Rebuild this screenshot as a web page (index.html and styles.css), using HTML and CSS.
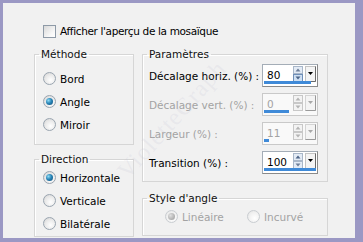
FILE: index.html
```html
<!DOCTYPE html>
<html lang="fr">
<head>
    <meta charset="UTF-8">
    <meta name="viewport" content="width=device-width, initial-scale=1.0">
    <title>Mosaïque</title>
    <link rel="stylesheet" href="styles.css">
</head>
<body>
    <div class="frame">
        <div class="panel">
            <div class="check-row">
                <span class="checkbox"></span>
                <span class="check-label">Afficher l'aperçu de la mosaïque</span>
            </div>

            <div class="columns">
                <div class="col">
                    <fieldset class="group method">
                        <legend>Méthode</legend>
                        <div class="group-body">
                            <div class="radio-row"><span class="radio"></span>Bord</div>
                            <div class="radio-row"><span class="radio checked"></span>Angle</div>
                            <div class="radio-row"><span class="radio"></span>Miroir</div>
                        </div>
                    </fieldset>

                    <fieldset class="group direction">
                        <legend>Direction</legend>
                        <div class="group-body">
                            <div class="radio-row"><span class="radio checked"></span>Horizontale</div>
                            <div class="radio-row"><span class="radio"></span>Verticale</div>
                            <div class="radio-row"><span class="radio"></span>Bilatérale</div>
                        </div>
                    </fieldset>
                </div>

                <div class="col">
                    <fieldset class="group params">
                        <legend>Paramètres</legend>
                        <div class="group-body">
                            <div class="param-row">
                                <span class="param-label">Décalage horiz. (%) :</span>
                                <div class="spin">
                                    <span class="spin-value">80</span>
                                    <svg class="spin-btns" width="24" height="17" viewBox="0 0 24 17">
                                        <rect x="0.5" y="0.5" width="9" height="7" fill="#e3ebf5" stroke="#a9b7c9"/>
                                        <rect x="0.5" y="8.5" width="9" height="7" fill="#cfe0f3" stroke="#6f8fb8"/>
                                        <path d="M5 2.5 L7.5 5.5 L2.5 5.5 Z" fill="#6d7f99"/>
                                        <path d="M2.5 10.5 L7.5 10.5 L5 13.5 Z" fill="#4c6488"/>
                                        <rect x="12.5" y="0.5" width="10" height="15" fill="#f4f4f4" stroke="#c4c4c4"/>
                                        <path d="M22.5 0.5 V15.5 H12.5" fill="none" stroke="#6a6a6a"/>
                                        <path d="M15 6 L20 6 L17.5 9 Z" fill="#000"/>
                                    </svg>
                                    <span class="spin-bar" style="width: 47px"></span>
                                </div>
                            </div>

                            <div class="param-row disabled">
                                <span class="param-label">Décalage vert. (%) :</span>
                                <div class="spin">
                                    <span class="spin-value">0</span>
                                    <svg class="spin-btns" width="24" height="17" viewBox="0 0 24 17">
                                        <rect x="0.5" y="0.5" width="9" height="7" fill="#f3f3f3" stroke="#c8c8c8"/>
                                        <rect x="0.5" y="8.5" width="9" height="7" fill="#f3f3f3" stroke="#c8c8c8"/>
                                        <path d="M5 2.5 L7.5 5.5 L2.5 5.5 Z" fill="#b4b4b4"/>
                                        <path d="M2.5 10.5 L7.5 10.5 L5 13.5 Z" fill="#b4b4b4"/>
                                        <rect x="12.5" y="0.5" width="10" height="15" fill="#f4f4f4" stroke="#d4d4d4"/>
                                        <path d="M22.5 0.5 V15.5 H12.5" fill="none" stroke="#9a9a9a"/>
                                        <path d="M15 6 L20 6 L17.5 9 Z" fill="#a8a8a8"/>
                                    </svg>
                                    <span class="spin-bar" style="width: 25px"></span>
                                </div>
                            </div>

                            <div class="param-row disabled">
                                <span class="param-label">Largeur (%) :</span>
                                <div class="spin">
                                    <span class="spin-value">11</span>
                                    <svg class="spin-btns" width="24" height="17" viewBox="0 0 24 17">
                                        <rect x="0.5" y="0.5" width="9" height="7" fill="#f3f3f3" stroke="#c8c8c8"/>
                                        <rect x="0.5" y="8.5" width="9" height="7" fill="#f3f3f3" stroke="#c8c8c8"/>
                                        <path d="M5 2.5 L7.5 5.5 L2.5 5.5 Z" fill="#b4b4b4"/>
                                        <path d="M2.5 10.5 L7.5 10.5 L5 13.5 Z" fill="#b4b4b4"/>
                                        <rect x="12.5" y="0.5" width="10" height="15" fill="#f4f4f4" stroke="#d4d4d4"/>
                                        <path d="M22.5 0.5 V15.5 H12.5" fill="none" stroke="#9a9a9a"/>
                                        <path d="M15 6 L20 6 L17.5 9 Z" fill="#a8a8a8"/>
                                    </svg>
                                    <span class="spin-bar" style="width: 5px"></span>
                                </div>
                            </div>

                            <div class="param-row">
                                <span class="param-label">Transition (%) :</span>
                                <div class="spin">
                                    <span class="spin-value">100</span>
                                    <svg class="spin-btns" width="24" height="17" viewBox="0 0 24 17">
                                        <rect x="0.5" y="0.5" width="9" height="7" fill="#e3ebf5" stroke="#a9b7c9"/>
                                        <rect x="0.5" y="8.5" width="9" height="7" fill="#e3ebf5" stroke="#a9b7c9"/>
                                        <path d="M5 2.5 L7.5 5.5 L2.5 5.5 Z" fill="#4c6488"/>
                                        <path d="M2.5 10.5 L7.5 10.5 L5 13.5 Z" fill="#6d7f99"/>
                                        <rect x="12.5" y="0.5" width="10" height="15" fill="#f4f4f4" stroke="#c4c4c4"/>
                                        <path d="M22.5 0.5 V15.5 H12.5" fill="none" stroke="#6a6a6a"/>
                                        <path d="M15 6 L20 6 L17.5 9 Z" fill="#000"/>
                                    </svg>
                                    <span class="spin-bar" style="width: 52px"></span>
                                </div>
                            </div>
                        </div>
                    </fieldset>

                    <fieldset class="group angle-style">
                        <legend>Style d'angle</legend>
                        <div class="group-body inline-radios">
                            <div class="radio-row disabled"><span class="radio checked"></span>Linéaire</div>
                            <div class="radio-row disabled"><span class="radio"></span>Incurvé</div>
                        </div>
                    </fieldset>
                </div>
            </div>

            <div class="watermark">VioletteGraph</div>
        </div>
    </div>
</body>
</html>
```

FILE: styles.css
```css
body {
    margin: 0;
    background-color: #9b98c4;
    font-family: "DejaVu Sans", Verdana, sans-serif;
    font-size: 10.5px;
    color: #000;
}

.frame {
    width: 363px;
    height: 242px;
    padding: 3px 8px 4px 3px;
    box-sizing: border-box;
}

.panel {
    position: relative;
    height: 100%;
    background-color: #f1f1f1;
    padding: 21px 27px 0 31px;
    box-sizing: border-box;
    overflow: hidden;
}

.check-row {
    display: flex;
    align-items: center;
    gap: 4px;
    height: 14px;
    margin-left: 9px;
}

.check-label {
    letter-spacing: -0.35px;
}

.checkbox {
    width: 11px;
    height: 11px;
    border: 1px solid #8e9aa7;
    background: linear-gradient(135deg, #d9d9d9, #f8f8f8 70%, #fff);
}

.columns {
    display: grid;
    grid-template-columns: 100px 186px;
    gap: 8px;
    margin-top: 9px;
}

.col {
    display: flex;
    flex-direction: column;
}

.group {
    margin: 0;
    padding: 0;
    border: 1px solid #d6d6d6;
    box-shadow: inset 1px 1px 0 #fff;
    min-width: 0;
    box-sizing: border-box;
}

.group legend {
    margin-left: 4px;
    padding: 0 2px;
    line-height: 14px;
    color: #111;
}

.method .group-body {
    padding: 6px 0 8px 8px;
}

.direction {
    margin-top: 7px;
    height: 85px;
}

.direction .group-body {
    padding-left: 8px;
}

.radio-row {
    display: flex;
    align-items: center;
    gap: 4px;
    height: 23px;
}

.radio {
    position: relative;
    width: 11px;
    height: 11px;
    border: 1px solid #9aa5b0;
    border-radius: 50%;
    background: radial-gradient(circle at 60% 65%, #fff, #e9e9e9 55%, #cfcfcf);
}

.radio.checked::after {
    content: "";
    position: absolute;
    left: 2px;
    top: 2px;
    width: 7px;
    height: 7px;
    border-radius: 50%;
    background: radial-gradient(circle at 35% 35%, #8fdcf5, #2a86b8 45%, #0e4a76);
}

.disabled {
    color: #a3a3a3;
}

.disabled .radio {
    border-color: #c9cdd1;
    background: radial-gradient(circle at 60% 65%, #fff, #f1f1f1 55%, #e0e0e0);
}

.disabled .radio.checked::after {
    background: radial-gradient(circle at 35% 35%, #e0e0e0, #b4b4b4 60%, #9c9c9c);
}

.params .group-body {
    padding: 0 9px 4px 6px;
}

.param-row {
    display: grid;
    grid-template-columns: 1fr 56px;
    align-items: center;
    height: 29px;
}

.spin {
    position: relative;
    display: flex;
    align-items: center;
    height: 23px;
    border: 1px solid #a4adb7;
    border-right-color: #8a8a8a;
    border-bottom-color: #8a8a8a;
    background-color: #fff;
    box-sizing: border-box;
}

.param-row.disabled .spin {
    border-color: #c9c9c9;
    background-color: #f9f9f9;
}

.spin-value {
    width: 26px;
    padding-left: 4px;
    margin-top: -2px;
}

.spin-btns {
    margin-top: -2px;
}

.spin-bar {
    position: absolute;
    left: 1px;
    bottom: 2px;
    height: 3px;
    background-color: #3f8ad8;
}

.angle-style {
    margin-top: 9px;
    height: 45px;
}

.inline-radios {
    display: flex;
    padding-left: 22px;
}

.inline-radios .radio-row:first-child {
    width: 82px;
}

.watermark {
    position: absolute;
    left: 169px;
    top: 117px;
    font-family: "Liberation Serif", serif;
    font-size: 24px;
    letter-spacing: 1px;
    white-space: nowrap;
    color: rgba(195, 195, 210, 0.2);
    transform: translate(-50%, -50%) rotate(-48deg);
    pointer-events: none;
}
```
